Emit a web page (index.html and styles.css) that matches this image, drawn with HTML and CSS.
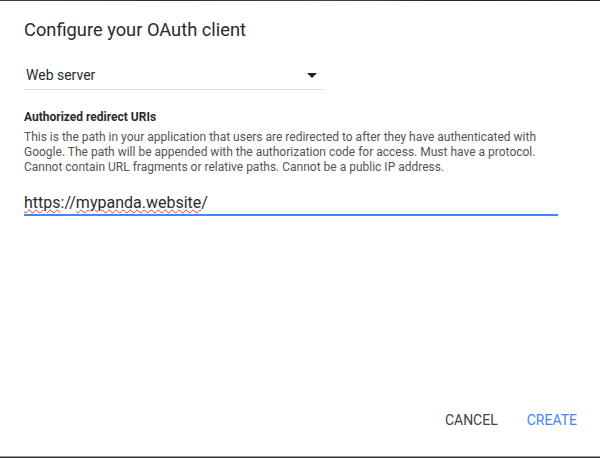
FILE: index.html
```html
<!DOCTYPE html>
<html>
<head>
<meta charset="utf-8">
<link rel="stylesheet" href="styles.css">
</head>
<body>
<div class="edge edge-top"></div>
<div class="dialog">
  <h1 class="title">Configure your OAuth client</h1>
  <div class="select">
    <span class="select-value">Web server</span>
    <svg class="caret" width="10" height="5" viewBox="0 0 10 5"><path d="M0 0h10L5 5z" fill="#212121"/></svg>
  </div>
  <div class="field-label">Authorized redirect URIs</div>
  <p class="help">This is the path in your application that users are redirected to after they have authenticated with Google. The path will be appended with the authorization code for access. Must have a protocol. Cannot contain URL fragments or relative paths. Cannot be a public IP address.</p>
  <div class="input"><span class="sp">https</span>://<span class="sp">mypanda.website</span>/</div>
  <div class="actions">
    <button class="btn btn-cancel">CANCEL</button>
    <button class="btn btn-create">CREATE</button>
  </div>
</div>
<div class="edge edge-bottom"></div>
</body>
</html>
```
FILE: styles.css
```css
html, body {
  margin: 0;
  padding: 0;
  background: #fff;
}
body {
  width: 600px;
  height: 458px;
  display: flex;
  flex-direction: column;
  font-family: Roboto, "Noto Sans", sans-serif;
  overflow: hidden;
}
.edge {
  flex: none;
  background: linear-gradient(90deg, #3a3a3a, #2a2f33 30%, #4a4038 55%, #22272b 75%, #1c2a2c);
}
.edge-top { height: 1px; }
.edge-bottom { height: 2px; background: linear-gradient(#9a9a9a 0 1px, #333 1px); }
.dialog {
  flex: 1;
  display: flex;
  flex-direction: column;
  padding: 0 15px 0 24px;
}
.title {
  margin: 16px 0 0;
  font-size: 18.3px;
  line-height: 26px;
  font-weight: 400;
  color: #2b2b2b;
}
.select {
  margin-top: 19px;
  width: 300px;
  height: 28px;
  box-sizing: border-box;
  border-bottom: 1px solid #e0e0e0;
  display: flex;
  align-items: center;
  justify-content: space-between;
  padding: 0 7px 2px 2px;
}
.select-value {
  font-size: 14px;
  color: #2b2b2b;
}
.caret { display: block; margin-top: 1px; }
.field-label {
  margin-top: 19px;
  font-size: 12px;
  font-weight: 700;
  color: #2b2b2b;
  line-height: 16px;
}
.help {
  margin: 5px 0 0;
  font-size: 12px;
  line-height: 15px;
  color: #555;
  width: 520px;
}
.input {
  margin-top: 17px;
  width: 534px;
  font-size: 16px;
  line-height: 22px;
  color: #2b2b2b;
  border-bottom: 2px solid #4285f4;
}
.sp {
  text-decoration: underline wavy #e53935;
  text-decoration-thickness: 1px;
  text-underline-offset: 1px;
}
.actions {
  margin-top: auto;
  margin-bottom: 20px;
  display: flex;
  justify-content: flex-end;
}
.btn {
  border: 0;
  background: none;
  font-family: Roboto, "Noto Sans", sans-serif;
  font-size: 14px;
  padding: 8px 8px;
  margin-left: 13px;
  cursor: pointer;
}
.btn-cancel { color: #424242; }
.btn-create { color: #4285f4; }
```
